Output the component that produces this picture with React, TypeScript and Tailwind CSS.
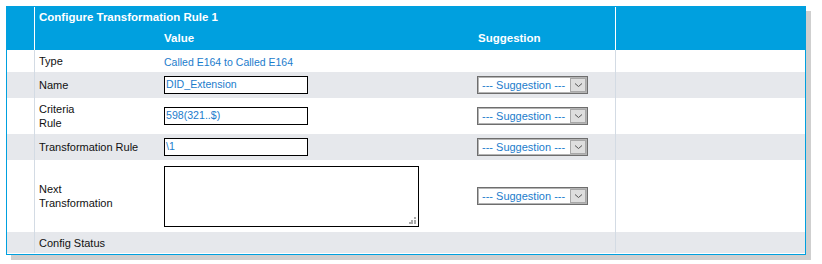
import React from "react";

const font = { fontFamily: '"Liberation Sans", Arial, sans-serif' };

function Select() {
  return (
    <div className="flex h-[18px] w-[111px] border border-[#6e6e6e] bg-white shadow-[inset_0_0_0_1px_#b4b4b4]">
      <div className="flex flex-1 items-center pl-[4px] text-[11px] text-[#1b7ccc]">--- Suggestion ---</div>
      <div className="m-[1px] ml-0 flex w-[16px] items-center justify-center border border-[#a8a8a8] bg-[#dedede]">
        <svg width="9" height="6" viewBox="0 0 9 6">
          <path d="M1 1.5 L4.5 4.5 L8 1.5" fill="none" stroke="#555" strokeWidth="1" />
        </svg>
      </div>
    </div>
  );
}

function TextInput({ value }: { value: string }) {
  return (
    <div className="flex h-[18px] w-[144px] items-center border border-black bg-white pl-[1px] text-[10.6px] text-[#1b7ccc]">
      {value}
    </div>
  );
}

function Row({
  h,
  gray,
  label,
  value,
  suggestion,
}: {
  h: string;
  gray?: boolean;
  label: React.ReactNode;
  value?: React.ReactNode;
  suggestion?: boolean;
}) {
  return (
    <div className={`flex ${h} ${gray ? "bg-[#e6e8ec]" : "bg-white"}`}>
      <div className="w-[28px] border-r border-[#d3dbe4]" />
      <div className="flex w-[580px] items-center">
        <div className="w-[129px] pl-[4px] text-[11px] leading-[14px] text-[#111]">{label}</div>
        <div className="w-[313px]">{value}</div>
        <div>{suggestion ? <Select /> : null}</div>
      </div>
      <div className="flex-1 border-l border-[#d3dbe4]" />
    </div>
  );
}

export default function App() {
  return (
    <div className="h-[264px] w-[822px] bg-white pl-[6px] pt-[6px]" style={font}>
      <div className="flex h-[249px] w-[800px] flex-col border border-[#00a0df] shadow-[5px_5px_0_#cfcfcf]">
        <div className="flex h-[43px] bg-[#00a0df] text-white">
          <div className="w-[28px] border-r border-white" />
          <div className="flex w-[580px] flex-col">
            <div className="flex h-[21px] items-center pl-[4px] text-[11.5px] font-bold">
              Configure Transformation Rule 1
            </div>
            <div className="flex h-[22px] items-center text-[11.5px] font-bold">
              <div className="w-[129px]" />
              <div className="w-[313px]">Value</div>
              <div className="pl-[1px]">Suggestion</div>
            </div>
          </div>
          <div className="flex-1 border-l border-white" />
        </div>
        <Row
          h="h-[22px]"
          label="Type"
          value={<span className="text-[10.5px] text-[#1b7ccc]">Called E164 to Called E164</span>}
        />
        <Row h="h-[26px]" gray label="Name" value={<TextInput value="DID_Extension" />} suggestion />
        <Row
          h="h-[36px]"
          label={
            <>
              Criteria
              <br />
              Rule
            </>
          }
          value={<TextInput value="598(321..$)" />}
          suggestion
        />
        <Row h="h-[26px]" gray label="Transformation Rule" value={<TextInput value="\1" />} suggestion />
        <Row
          h="h-[72px]"
          label={
            <>
              Next
              <br />
              Transformation
            </>
          }
          value={
            <div className="relative h-[61px] w-[255px] border border-black bg-white">
              <svg className="absolute bottom-[2px] right-[2px]" width="7" height="7" viewBox="0 0 7 7">
                <rect x="5" y="0" width="2" height="2" fill="#aaa" />
                <rect x="2" y="3" width="2" height="2" fill="#aaa" />
                <rect x="5" y="3" width="2" height="2" fill="#aaa" />
                <rect x="0" y="5" width="2" height="2" fill="#aaa" />
                <rect x="2" y="5" width="2" height="2" fill="#aaa" />
                <rect x="5" y="5" width="2" height="2" fill="#aaa" />
              </svg>
            </div>
          }
          suggestion
        />
        <Row h="h-[21px]" gray label="Config Status" />
      </div>
    </div>
  );
}
